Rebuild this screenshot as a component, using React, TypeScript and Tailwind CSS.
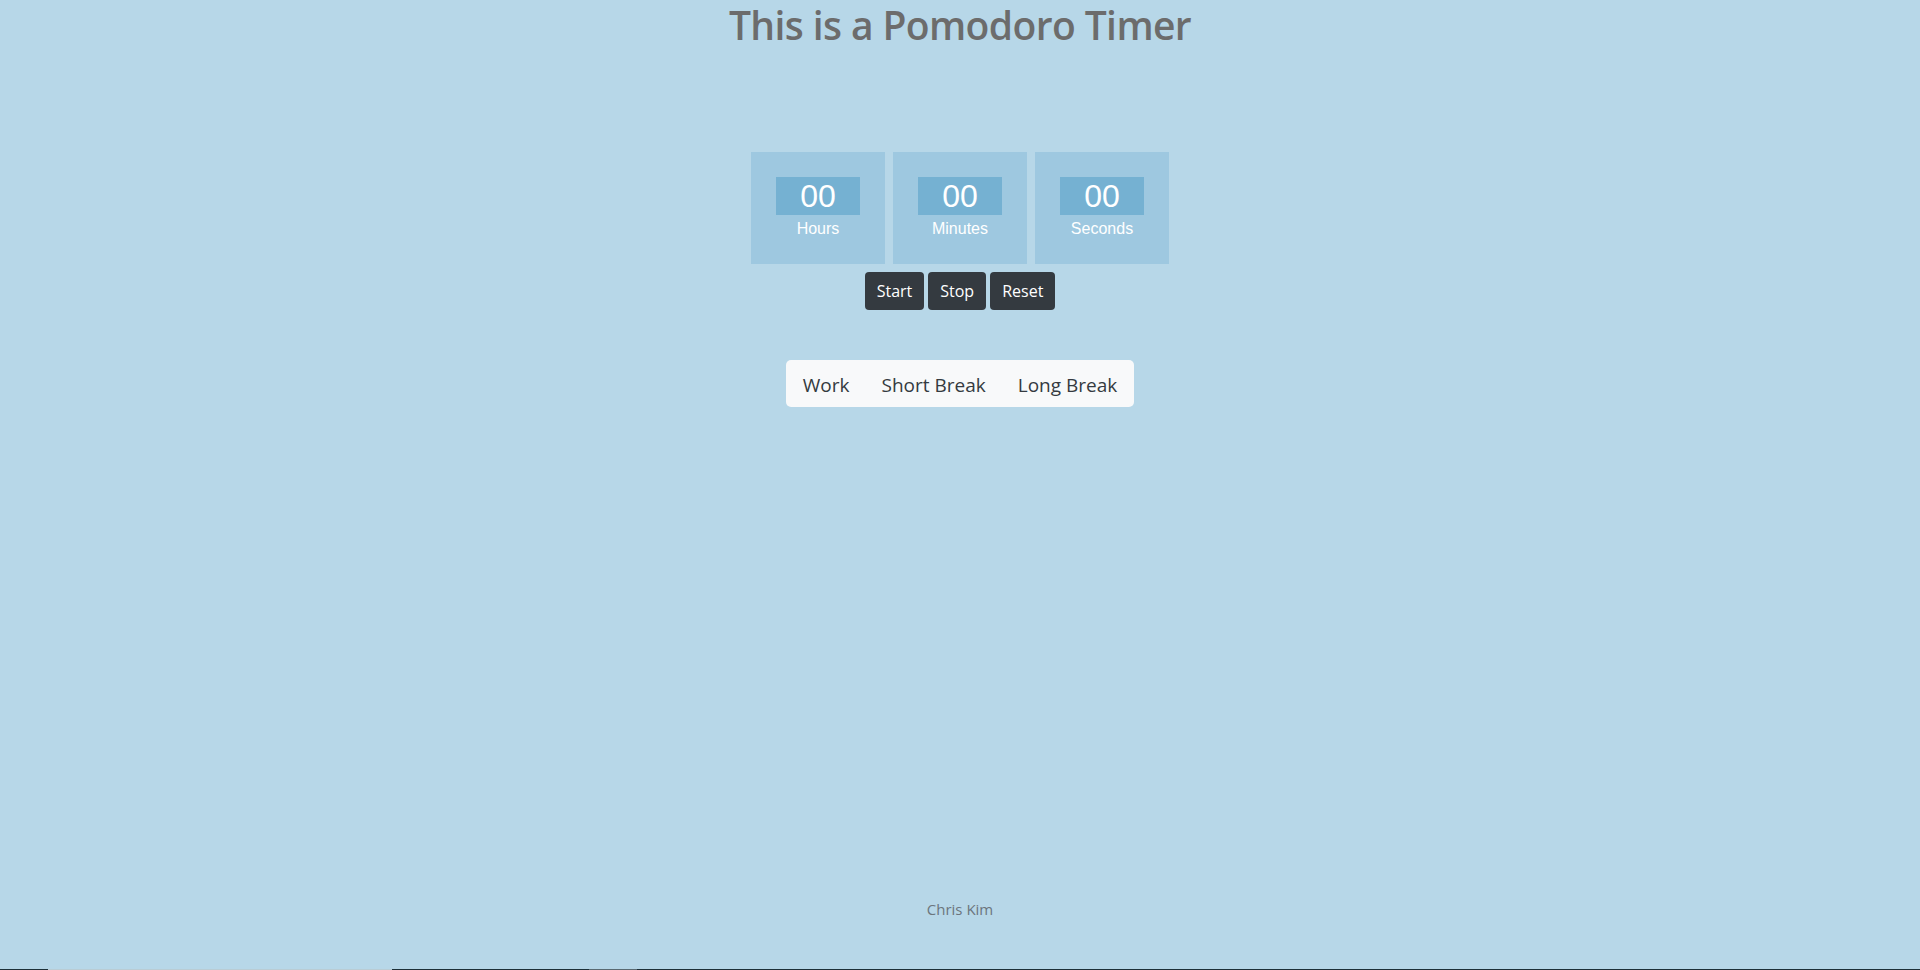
const units = [
  { value: "00", label: "Hours" },
  { value: "00", label: "Minutes" },
  { value: "00", label: "Seconds" },
];

const modes = ["Work", "Short Break", "Long Break"];

export default function App() {
  return (
    <div className="h-[970px] bg-[#b7d7e8] flex flex-col items-center font-['Open_Sans',sans-serif] overflow-hidden">
      <h1 className="pt-px text-[39px] leading-[48px] font-semibold text-[#6c6c6c] tracking-[-0.6px]">
        This is a Pomodoro Timer
      </h1>

      {/* timer */}
      <div className="mt-[103px] flex gap-2">
        {units.map((u) => (
          <div key={u.label} className="w-[134px] h-[112px] bg-[#9ec8e0] flex flex-col items-center pt-[25px]">
            <div className="w-[84px] h-[38px] bg-[#75b1d2] flex items-center justify-center text-white text-[32px] leading-none font-['Liberation_Sans',sans-serif]">
              {u.value}
            </div>
            <div className="mt-[2px] text-white text-[16px] leading-6 font-['Liberation_Sans',sans-serif]">{u.label}</div>
          </div>
        ))}
      </div>

      <div className="mt-2 flex gap-1">
        {["Start", "Stop", "Reset"].map((b) => (
          <button key={b} className="h-[38px] px-3 rounded-[4px] bg-[#343a40] text-white text-[16px]">
            {b}
          </button>
        ))}
      </div>

      <nav className="mt-[50px] h-[47px] bg-[#f8f9fa] rounded-[5px] flex items-center px-px pt-[3px]">
        {modes.map((m) => (
          <a key={m} className="px-4 text-[19px] text-[#343a40] cursor-pointer">
            {m}
          </a>
        ))}
      </nav>

      <footer className="mt-auto mb-[48px] text-[15px] leading-6 text-[#6c757d]">Chris Kim</footer>

      <div className="w-full h-px flex">
        <div className="w-[48px] bg-[#1d3038]" />
        <div className="w-[344px] bg-[#b9ccd4]" />
        <div className="w-[197px] bg-[#1d3038]" />
        <div className="w-[48px] bg-[#5a6a72]" />
        <div className="flex-1 bg-[#1d3038]" />
      </div>
    </div>
  );
}
